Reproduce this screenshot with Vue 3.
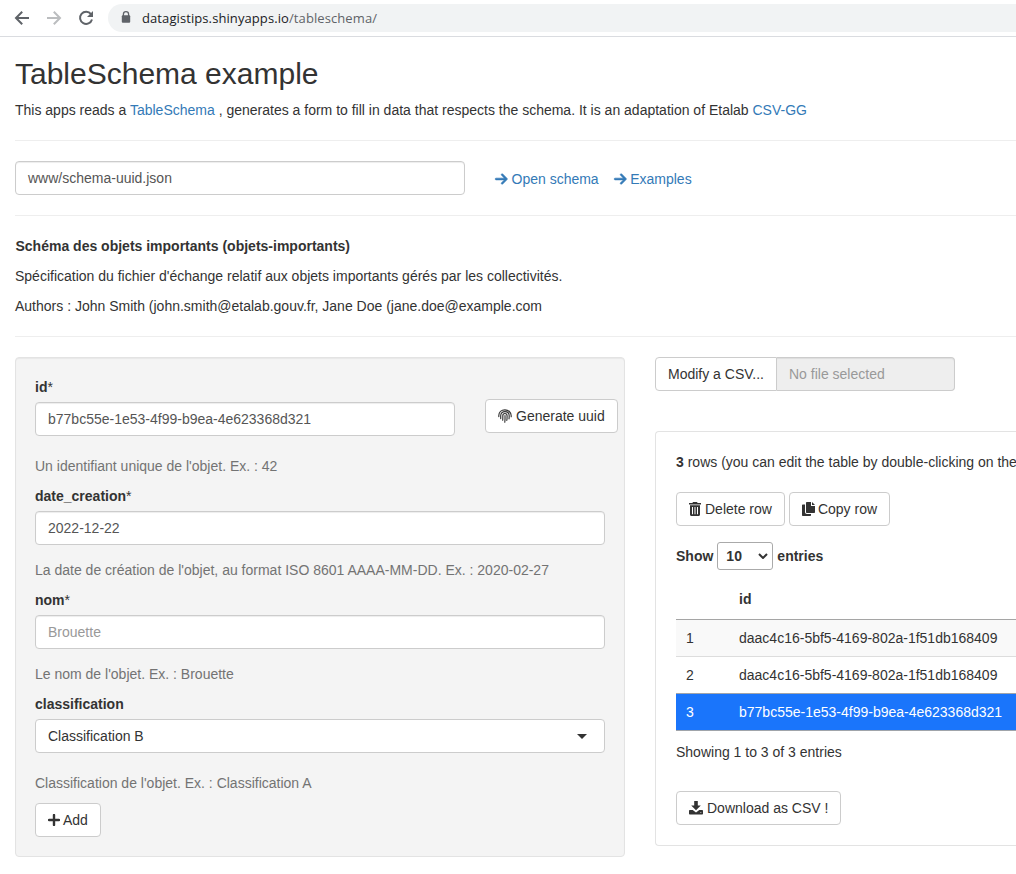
<script setup>
const rows = [
  { n: 1, id: 'daac4c16-5bf5-4169-802a-1f51db168409' },
  { n: 2, id: 'daac4c16-5bf5-4169-802a-1f51db168409' },
  { n: 3, id: 'b77bc55e-1e53-4f99-b9ea-4e623368d321', selected: true },
]
const arrow =
  'M438.6 278.6c12.5-12.5 12.5-32.8 0-45.3l-160-160c-12.5-12.5-32.8-12.5-45.3 0s-12.5 32.8 0 45.3L338.8 224 32 224c-17.7 0-32 14.3-32 32s14.3 32 32 32l306.7 0L233.4 393.4c-12.5 12.5-12.5 32.8 0 45.3s32.8 12.5 45.3 0l160-160z'
</script>

<template>
  <div class="window">
    <header class="bar">
      <svg class="nav" viewBox="0 0 16 16"><path d="M15 8H2M8.2 1.8 2 8l6.2 6.2" fill="none" stroke="#5f6368" stroke-width="2" /></svg>
      <svg class="nav" viewBox="0 0 16 16"><path d="M1 8h13M7.8 1.8 14 8l-6.2 6.2" fill="none" stroke="#bbbdbf" stroke-width="2" /></svg>
      <svg class="nav" viewBox="0 0 16 16">
        <path d="M13 4.1A6.1 6.1 0 1 0 14 9.5" fill="none" stroke="#5f6368" stroke-width="2" />
        <path d="M15 1v6H9z" fill="#5f6368" />
      </svg>
      <div class="address">
        <svg class="lock" viewBox="0 0 10 13">
          <path d="M2.4 5V3.300a2.600 2.600 0 0 1 5.200 0V5" fill="none" stroke="#5f6368" stroke-width="1.300" />
          <rect x="0.8" y="4.300" width="8.400" height="7.500" rx="1" fill="#5f6368" />
        </svg>
        <span class="url">datagistips.shinyapps.io<span class="path">/tableschema/</span></span>
      </div>
    </header>

    <main class="page">
      <h2>TableSchema example</h2>
      <p>This apps reads a <a>TableSchema</a> , generates a form to fill in data that respects the schema. It is an adaptation of Etalab <a>CSV-GG</a></p>
      <hr />
      <div class="schema">
        <div class="control path-input">www/schema-uuid.json</div>
        <a class="link"><svg class="arrow" viewBox="0 0 448 512"><path :d="arrow" /></svg>Open schema</a>
        <a class="link"><svg class="arrow" viewBox="0 0 448 512"><path :d="arrow" /></svg>Examples</a>
      </div>
      <hr />
      <p class="name">Schéma des objets importants (objets-importants)</p>
      <p>Spécification du fichier d'échange relatif aux objets importants gérés par les collectivités.</p>
      <p>Authors : John Smith (john.smith@etalab.gouv.fr, Jane Doe (jane.doe@example.com</p>
      <hr />

      <div class="columns">
        <section class="well">
          <div class="id-row">
            <div class="id-field">
              <label>id<i>*</i></label>
              <div class="control">b77bc55e-1e53-4f99-b9ea-4e623368d321</div>
            </div>
            <button class="btn generate">
              <svg class="finger" viewBox="0 0 14 14" fill="none" stroke="#333" stroke-width="1.150" stroke-linecap="round">
                <path d="M.8 7.600V6.600C.8 3.200 3.400.8 6.900.8s6.300 2.500 6.300 5.900v1" />
                <path d="M2.700 9.600V6.700c0-2.400 1.800-4.100 4.200-4.100s4.300 1.700 4.300 4.200c0 1.400 0 2.200-.2 3" />
                <path d="M4.700 11.200c.2-1.600.1-3 .1-4.400 0-1.400.9-2.300 2.100-2.300s2.200 1 2.200 2.400c0 1.900 0 3-.3 4.500" />
                <path d="M7 6.600c.1 2.400 0 4.600-.2 6.600" />
              </svg>Generate uuid
            </button>
          </div>
          <p class="help first">Un identifiant unique de l'objet. Ex. : 42</p>
          <label>date_creation<i>*</i></label>
          <div class="control">2022-12-22</div>
          <p class="help">La date de création de l'objet, au format ISO 8601 AAAA-MM-DD. Ex. : 2020-02-27</p>
          <label>nom<i>*</i></label>
          <div class="control placeholder">Brouette</div>
          <p class="help">Le nom de l'objet. Ex. : Brouette</p>
          <label>classification</label>
          <div class="control picker">Classification B<span class="caret"></span></div>
          <p class="help first">Classification de l'objet. Ex. : Classification A</p>
          <button class="btn">
            <svg class="plus" viewBox="0 0 12 12"><path d="M6 1v10M1 6h10" stroke="#333" stroke-width="2.400" stroke-linecap="round" /></svg>Add
          </button>
        </section>

        <div class="right">
          <div class="upload">
            <div class="browse">Modify a CSV...</div>
            <div class="file">No file selected</div>
          </div>
          <section class="panel">
            <p class="count"><b>3</b> rows (you can edit the table by double-clicking on the</p>
            <div class="actions">
              <button class="btn">
                <svg class="trash" viewBox="0 0 12 14" fill="#333">
                  <path d="M0 1h3.400L4 0h4l.6 1H12v1.600H0z" />
                  <path fill-rule="evenodd" d="M1 3.300h10v9.200c0 .9-.6 1.500-1.500 1.500h-7C1.600 14 1 13.400 1 12.500zM3 5v7.300h1V5zm2.500 0v7.300h1V5zM8 5v7.300h1V5z" />
                </svg>Delete row
              </button>
              <button class="btn">
                <svg class="copy" viewBox="0 0 13 14" fill="#333">
                  <path d="M5 0h4v4h4v6c0 .6-.4 1-1 1H5c-.6 0-1-.4-1-1V1c0-.6.4-1 1-1z" />
                  <path d="M10 0l3 3h-3z" />
                  <path d="M0 3.500C0 2.900.4 2.500 1 2.500h2V10c0 1.200.8 2 2 2h4v1c0 .6-.4 1-1 1H1c-.6 0-1-.4-1-1z" />
                </svg>Copy row
              </button>
            </div>
            <div class="length">
              <span>Show</span>
              <div class="select">10
                <svg class="chevron" viewBox="0 0 10 6"><path d="M1 1l4 4 4-4" fill="none" stroke="#333" stroke-width="2" /></svg>
              </div>
              <span>entries</span>
            </div>
            <table>
              <thead><tr><th class="num"></th><th>id</th></tr></thead>
              <tbody>
                <tr v-for="row in rows" :key="row.n" :class="{ selected: row.selected }">
                  <td class="num">{{ row.n }}</td>
                  <td>{{ row.id }}</td>
                </tr>
              </tbody>
            </table>
            <p class="info">Showing 1 to 3 of 3 entries</p>
            <button class="btn">
              <svg class="download" viewBox="0 0 14 14" fill="#333">
                <path d="M5.200 0h3.600v4.600h3L7 9.300 2.200 4.600h3z" />
                <path fill-rule="evenodd" d="M.8 9h2.900L7 11.500 10.300 9h2.900c.5 0 .8.300.8.800v2.900c0 .5-.3.800-.8.800H.8c-.5 0-.8-.3-.8-.8V9.800C0 9.300.3 9 .8 9zM11.400 11.200v.9h.9v-.9z" />
              </svg>Download as CSV !
            </button>
          </section>
        </div>
      </div>
    </main>
  </div>
</template>

<style>
body { margin: 0; background: #fff; overflow: hidden; }
</style>

<style scoped>
* { box-sizing: border-box; }
.window {
  width: 1016px;
  height: 874px;
  overflow: hidden;
  font: 14px/20px "Liberation Sans", Arial, sans-serif;
  color: #333;
  white-space: nowrap;
}
.bar {
  display: flex;
  align-items: center;
  height: 37px;
  padding: 0 0 1px 14px;
  border-bottom: 1px solid #dadce0;
}
.nav { width: 16px; height: 16px; margin-right: 16px; flex: none; }
.address {
  display: flex;
  align-items: center;
  flex: 1;
  height: 28px;
  margin-left: -2px;
  padding-left: 13px;
  border-radius: 14px 0 0 14px;
  background: #f1f3f4;
}
.lock { width: 10px; height: 13px; margin-right: 11px; }
.url { font: 13px/20px "Open Sans", "Noto Sans", sans-serif; letter-spacing: 0.09px; color: #202124; }
.path { color: #5f6368; }

.page { padding: 20px 0 0 15px; }
h2 { margin: 0 0 10px; font-size: 30px; line-height: 33px; font-weight: 400; }
p { margin: 0 0 10px; }
a { color: #337ab7; }
hr { margin: 20px 0; border: 0; border-top: 1px solid #eee; }
.name { padding-left: 0.5px; font-weight: 700; }
.schema { display: flex; align-items: center; }
.control {
  height: 34px;
  padding: 6px 12px;
  border: 1px solid #ccc;
  border-radius: 4px;
  background: #fff;
  color: #555;
  box-shadow: inset 0 1px 1px rgba(0, 0, 0, 0.075);
}
.path-input { width: 450px; margin-right: 30px; }
.link { display: flex; align-items: center; margin: 2px 15px 0 0; }
.arrow { width: 12.5px; height: 14px; margin-right: 4px; fill: #337ab7; stroke: #337ab7; stroke-width: 22; overflow: visible; }

.columns { display: flex; align-items: flex-start; gap: 30px; }
.well {
  flex: none;
  width: 610px;
  height: 500px;
  padding: 19px;
  border: 1px solid #e3e3e3;
  border-radius: 4px;
  background: #f4f4f4;
  box-shadow: inset 0 1px 1px rgba(0, 0, 0, 0.05);
}
label { display: block; margin-bottom: 5px; font-weight: 700; }
label i { font-style: normal; font-weight: 400; }
.id-row { display: flex; align-items: flex-start; gap: 30px; }
.id-field { flex: none; width: 420px; }
.help { margin: 15px 0 10px; color: #737373; }
.help.first { margin-top: 20px; }
.control.placeholder { color: #999; }
.control.picker { display: flex; justify-content: space-between; align-items: center; color: #333; box-shadow: none; }
.caret { margin-right: 5px; border: 5px solid transparent; border-top-color: #333; border-bottom: 0; }
.btn {
  display: inline-flex;
  flex: none;
  align-items: center;
  height: 34px;
  padding: 0 12px;
  border: 1px solid #ccc;
  border-radius: 4px;
  background: #fff;
  color: #333;
  font: inherit;
}
.generate { margin-top: 22px; }
.finger { width: 14px; height: 14px; margin-right: 4px; }
.plus { width: 12px; height: 12px; margin-right: 3px; }

.right { flex: 1; min-width: 0; }
.upload { display: flex; height: 34px; }
.browse { width: 122px; padding: 6px 12px; border: 1px solid #ccc; border-radius: 4px 0 0 4px; }
.file {
  width: 178px;
  padding: 6px 12px;
  border: 1px solid #ccc;
  border-left: 0;
  border-radius: 0 4px 4px 0;
  background: #eee;
  color: #999;
  box-shadow: inset 0 1px 1px rgba(0, 0, 0, 0.075);
}
.panel {
  height: 415px;
  margin-top: 40px;
  padding: 20px 0 0 20px;
  border: 1px solid #e3e3e3;
  border-right: 0;
  border-radius: 4px 0 0 4px;
}
.count { margin-bottom: 20px; }
.actions { display: flex; gap: 4px; }
.trash { width: 12px; height: 14px; margin-right: 4px; }
.copy { width: 13px; height: 14px; margin-right: 3px; }
.length { display: flex; align-items: center; gap: 4px; height: 28px; margin: 16px 0 9px; font-weight: 700; }
.select {
  display: flex;
  align-items: center;
  justify-content: space-between;
  width: 56px;
  height: 28px;
  padding: 0 4px 0 8px;
  border: 1px solid #aaa;
  border-radius: 3px;
}
.chevron { width: 10px; height: 6px; }
table { width: 100%; border-collapse: separate; border-spacing: 0; }
th { height: 41px; padding: 0 0 0 10px; border-bottom: 1px solid #a5a5a5; text-align: left; font-weight: 700; }
td { height: 37px; padding: 0 0 0 10px; border-bottom: 1px solid #ddd; }
.num { width: 53px; }
tbody tr:first-child { background: #f9f9f9; }
tbody tr:nth-child(2) td { border-bottom-color: #a0a4aa; }
.selected { background: #1a75fb; color: #fff; }
.selected td { border-bottom-color: #a0a4aa; }
.info { margin: 11px 0 29px; }
.download { width: 14px; height: 14px; margin-right: 4px; }
</style>
